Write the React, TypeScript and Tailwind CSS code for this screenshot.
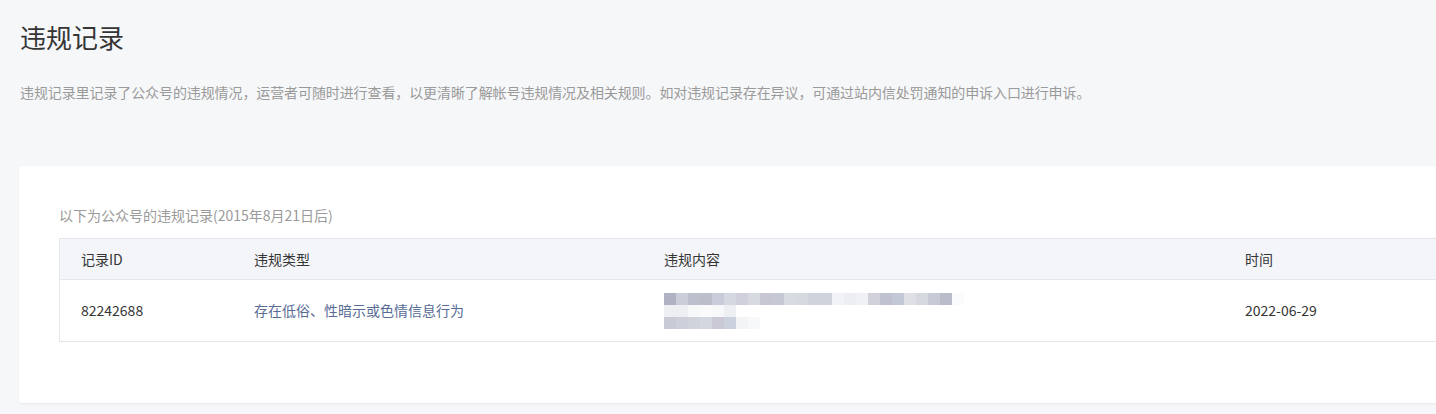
const mosaic: string[][] = [
  ["#b0b2c4", "#cbcdd8", "#bebfcc", "#bcbfca", "#c8ccd8", "#d6d8e1", "#cfd0db", "#d8dae2", "#c6c7d3", "#c6c8d4", "#d9dbe3", "#d7d9e1", "#d0d2dc", "#d0d2dc", "#f2f3f6", "#eceef2", "#f0f1f4", "#d0d1db", "#bfc1cf", "#c3c8d7", "#dfe0e6", "#d7d9e1", "#c7cbd6", "#bbbcc9", "#fafbfc"],
  ["#eeeff3", "#eeeff3", "#f7f8fa", "#fafafb", "#f7f8fa", "#eeeff3"],
  ["#c8cad6", "#cdcfda", "#d0d2dc", "#d4d6e0", "#cbc9d5", "#cbd1dd", "#f3f4f6", "#f7f8fa"],
];

export default function App() {
  return (
    <div
      className="min-h-[414px] overflow-hidden bg-[#f6f7f9] pl-[19px] text-[#353535]"
      style={{ fontFamily: '"Noto Sans CJK SC", "Noto Sans", sans-serif' }}
    >
      <h1 className="pl-px pt-[19px] text-[26px] leading-[36px] font-normal text-[#353535]">违规记录</h1>
      <p className="mt-[27px] pl-px text-[14px] leading-[20px] tracking-[-0.1px] text-[#9a9a9a]">
        违规记录里记录了公众号的违规情况，运营者可随时进行查看，以更清晰了解帐号违规情况及相关规则。如对违规记录存在异议，可通过站内信处罚通知的申诉入口进行申诉。
      </p>

      {/* record card */}
      <div className="mt-[64px] w-[1480px] rounded-[3px] bg-white pb-[61px] pl-[40px] pt-[39px] shadow-[0_1px_2px_rgba(150,150,150,0.15)]">
        <p className="mb-[13px] text-[14px] leading-[20px] text-[#9a9a9a]">以下为公众号的违规记录(2015年8月21日后)</p>
        <div className="border border-r-0 border-[#e4e6eb] text-[14px]">
          <div className="flex h-[41px] items-center border-b border-[#e4e6eb] bg-[#f4f5f9]">
            <div className="w-[173px] pl-[21px]">记录ID</div>
            <div className="w-[410px] pl-[21px]">违规类型</div>
            <div className="w-[581px] pl-[21px]">违规内容</div>
            <div className="pl-[21px]">时间</div>
          </div>
          <div className="flex h-[61px] items-center">
            <div className="w-[173px] pl-[21px]">82242688</div>
            <div className="w-[410px] pl-[21px] text-[#576b95]">存在低俗、性暗示或色情信息行为</div>
            <div className="flex w-[581px] flex-col pl-[21px]">
              {mosaic.map((row, i) => (
                <div key={i} className="flex h-[12px]">
                  {row.map((c, j) => (
                    <div key={j} className="h-[12px] w-[12px]" style={{ background: c }} />
                  ))}
                </div>
              ))}
            </div>
            <div className="pl-[21px]">2022-06-29</div>
          </div>
        </div>
      </div>
    </div>
  );
}
